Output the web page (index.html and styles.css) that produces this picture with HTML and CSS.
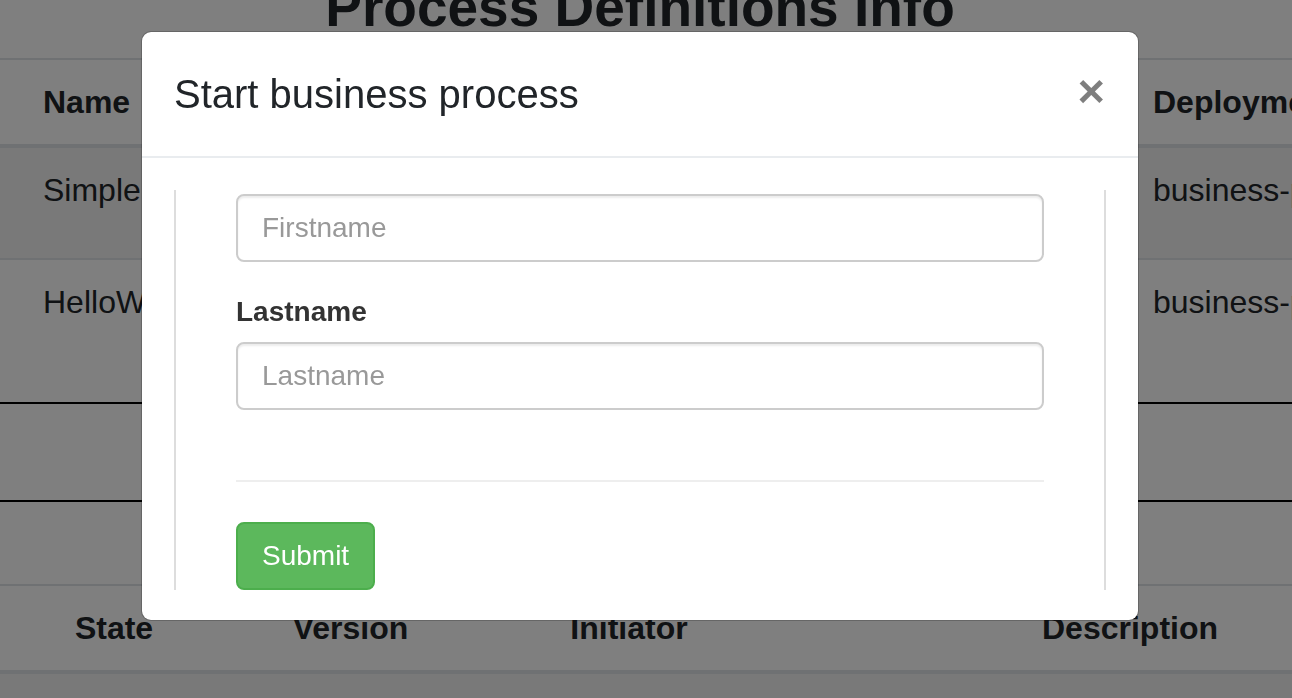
FILE: index.html
```html
<!DOCTYPE html>
<html lang="en">
<head>
<meta charset="utf-8">
<title>Process Definitions Info</title>
<link rel="stylesheet" href="styles.css">
</head>
<body>
<main class="page">
  <h1 class="page-title">Process Definitions Info</h1>
  <table class="grid defs">
    <thead>
      <tr>
        <th class="c-name">Name</th>
        <th class="c-key"></th>
        <th class="c-ver"></th>
        <th class="c-dep">Deployment</th>
      </tr>
    </thead>
    <tbody>
      <tr class="striped row-a">
        <td class="c-name">SimpleProcess</td>
        <td></td>
        <td></td>
        <td>business-process.bpmn</td>
      </tr>
      <tr class="row-b">
        <td class="c-name">HelloWorld</td>
        <td></td>
        <td></td>
        <td>business-process.bpmn</td>
      </tr>
    </tbody>
  </table>
  <div class="section-break"></div>
  <table class="grid insts">
    <thead>
      <tr>
        <th class="i1">State</th>
        <th class="i2">Version</th>
        <th class="i3">Initiator</th>
        <th class="i4">Description</th>
      </tr>
    </thead>
    <tbody>
      <tr class="striped row-c">
        <td></td><td></td><td></td><td></td>
      </tr>
    </tbody>
  </table>
</main>

<div class="backdrop">
  <div class="modal" role="dialog" aria-labelledby="modal-title">
    <div class="modal-header">
      <h5 class="modal-title" id="modal-title">Start business process</h5>
      <button type="button" class="close" aria-label="Close">×</button>
    </div>
    <div class="modal-body">
      <form class="start-form">
        <div class="form-group">
          <input class="form-control" type="text" placeholder="Firstname">
        </div>
        <div class="form-group">
          <label class="form-label">Lastname</label>
          <input class="form-control" type="text" placeholder="Lastname">
        </div>
        <hr class="rule">
        <button type="button" class="btn-success">Submit</button>
      </form>
    </div>
  </div>
</div>
</body>
</html>
```
FILE: styles.css
```css
html, body {
  margin: 0;
  padding: 0;
  overflow: hidden;
  background: #fff;
}

body {
  font-family: "Liberation Sans", Arial, Helvetica, sans-serif;
  font-size: 32px;
  line-height: 1.5;
  color: #212529;
}

.page {
  width: 1292px;
}

.page-title {
  margin: -26px 0 18px;
  padding-right: 12px;
  font-size: 55px;
  line-height: 1.2;
  font-weight: 700;
  text-align: center;
}

.grid {
  border-collapse: separate;
  border-spacing: 0;
  table-layout: fixed;
  white-space: nowrap;
}

.grid th,
.grid td {
  padding: 18px 24px;
  vertical-align: top;
  text-align: left;
  overflow: hidden;
}

.grid th {
  font-weight: 700;
  border-top: 2px solid #dee2e6;
  border-bottom: 4px solid #dee2e6;
}

.grid tbody tr + tr td {
  border-top: 2px solid #dee2e6;
}

.grid .striped {
  background: rgba(0, 0, 0, 0.05);
}

.defs {
  width: 1600px;
}

.defs .c-name { width: 99px; padding-left: 43px; padding-right: 0; }
.defs .c-key { width: 410px; }
.defs .c-ver { width: 481px; }
.defs .c-dep { width: 423px; }

.row-a { height: 110px; }
.row-b { height: 144px; }
.row-c { height: 100px; }

.section-break {
  height: 96px;
  border-top: 2px solid #000;
  border-bottom: 2px solid #000;
  margin-bottom: 82px;
}

.insts {
  width: 1475px;
}

.insts th { text-align: center; padding-left: 0; padding-right: 0; }
.insts .i1 { width: 228px; }
.insts .i2 { width: 245px; }
.insts .i3 { width: 312px; }
.insts .i4 { width: 690px; }

/* Modal */
.backdrop {
  position: fixed;
  inset: 0;
  background: rgba(0, 0, 0, 0.5);
  display: flex;
  justify-content: center;
  align-items: flex-start;
  padding: 31px 12px 0 0;
}

.modal {
  width: 998px;
  box-sizing: border-box;
  background: #fff;
  border: 1px solid rgba(0, 0, 0, 0.2);
  border-radius: 10px;
  background-clip: padding-box;
}

.modal-header {
  display: flex;
  align-items: flex-start;
  justify-content: space-between;
  padding: 32px;
  border-bottom: 2px solid #e9ecef;
}

.modal-title {
  margin: 0;
  font-size: 40px;
  line-height: 60px;
  font-weight: 400;
  color: #212529;
}

.close {
  margin: -32px -32px -32px auto;
  padding: 35px 33px 29px 32px;
  border: 0;
  background: transparent;
  font-family: "Liberation Sans", Arial, sans-serif;
  font-size: 47px;
  font-weight: 700;
  line-height: 1;
  color: #000;
  opacity: 0.5;
  text-shadow: 0 2px 0 #fff;
  cursor: pointer;
}

.modal-body {
  padding: 32px 32px 30px;
}

.start-form {
  margin: 0;
  padding: 4px 60px 0;
  border-left: 2px solid #ddd;
  border-right: 2px solid #ddd;
  font-size: 28px;
  line-height: 40px;
  color: #333;
}

.form-group {
  margin-bottom: 30px;
}

.form-label {
  display: block;
  margin-bottom: 10px;
  font-weight: 700;
}

.form-control {
  display: block;
  width: 100%;
  height: 68px;
  box-sizing: border-box;
  padding: 12px 24px;
  font-family: inherit;
  font-size: 28px;
  line-height: 40px;
  color: #555;
  background: #fff;
  border: 2px solid #ccc;
  border-radius: 8px;
  box-shadow: inset 0 2px 2px rgba(0, 0, 0, 0.075);
  outline: none;
}

.form-control::placeholder {
  color: #999;
  opacity: 1;
}

.rule {
  margin: 70px 0 40px;
  border: 0;
  border-top: 2px solid #eee;
  height: 0;
}

.btn-success {
  display: block;
  height: 68px;
  box-sizing: border-box;
  padding: 12px 24px;
  font-family: inherit;
  font-size: 28px;
  line-height: 40px;
  color: #fff;
  background: #5cb85c;
  border: 2px solid #4cae4c;
  border-radius: 8px;
  cursor: pointer;
}
```
